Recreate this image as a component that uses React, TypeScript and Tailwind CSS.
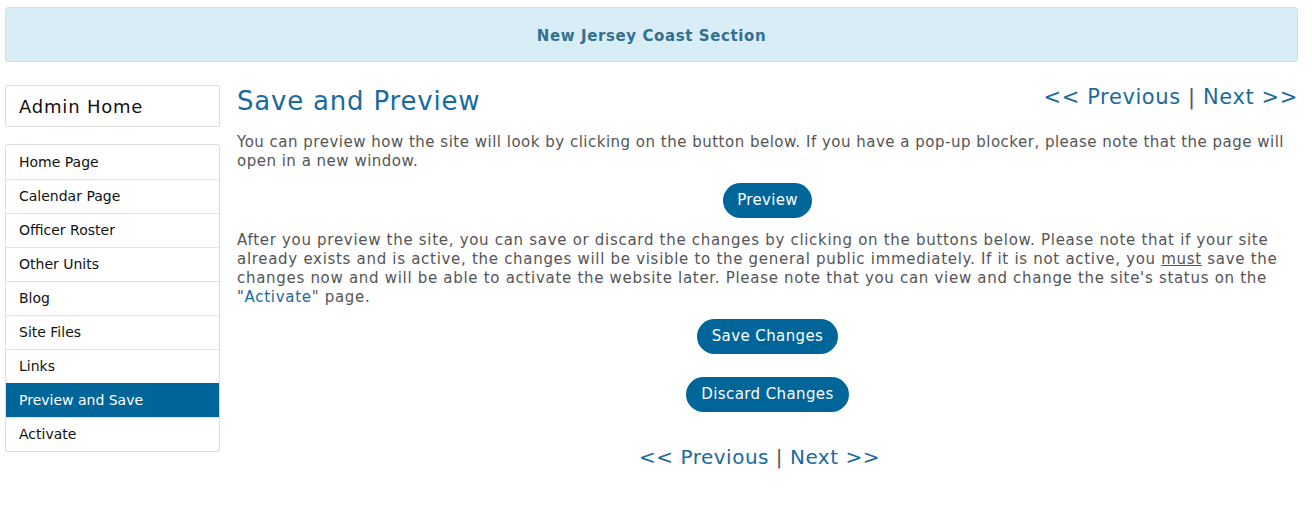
const NAV = [
  "Home Page",
  "Calendar Page",
  "Officer Roster",
  "Other Units",
  "Blog",
  "Site Files",
  "Links",
  "Preview and Save",
  "Activate",
];

function PrevNext({ size }: { size: "lg" | "md" }) {
  return (
    <div
      className={
        size === "lg"
          ? "text-[21px] leading-6 text-[#1b6a9c] tracking-[0.6px]"
          : "text-[20px] leading-6 text-[#1b6a9c] tracking-[0.5px]"
      }
    >
      <a href="#">&lt;&lt; Previous</a>
      <span className="text-[#555]"> | </span>
      <a href="#">Next &gt;&gt;</a>
    </div>
  );
}

export default function App() {
  return (
    <div
      className="min-h-[530px] bg-white pt-[7px] pl-[5px] pr-[14px]"
      style={{ fontFamily: '"DejaVu Sans", Verdana, sans-serif' }}
    >
      {/* Banner */}
      <div className="h-[55px] flex items-center justify-center rounded-[3px] border border-[#bce8f1] bg-[#d9edf7]">
        <span className="mt-[3px] text-[15px] font-bold tracking-[0.6px] text-[#31708f]">New Jersey Coast Section</span>
      </div>

      <div className="mt-[23px] flex gap-[17px]">
        {/* Sidebar */}
        <div className="w-[215px] shrink-0">
          <div className="h-[42px] flex items-center px-[13px] border border-[#ddd] rounded-[2px] text-[18px] tracking-[0.8px] text-[#111]">
            Admin Home
          </div>
          <div className="mt-[17px] border border-[#ddd] rounded-[2px]">
            {NAV.map((item, i) => (
              <div
                key={item}
                className={
                  item === "Preview and Save"
                    ? "h-[34px] flex items-center px-[13px] text-[14px] bg-[#006699] text-white"
                    : i === 0
                    ? "h-[34px] flex items-center px-[13px] text-[14px] text-[#111]"
                    : "h-[34px] flex items-center px-[13px] text-[14px] text-[#111] border-t border-[#e5e0e8]"
                }
              >
                {item}
              </div>
            ))}
          </div>
        </div>

        {/* Main */}
        <div className="flex-1 text-[15px] leading-[19px] tracking-[0.7px] text-[#555]">
          <div className="flex items-start justify-between">
            <h1 className="text-[26px] leading-[32px] tracking-[0.8px] text-[#1b6a9c]">Save and Preview</h1>
            <PrevNext size="lg" />
          </div>
          <p className="mt-[16px] tracking-[0.5px]">
            You can preview how the site will look by clicking on the button below. If you have a pop-up
            blocker, please note that the page will open in a new window.
          </p>
          <div className="mt-[12px] flex justify-center">
            <button className="h-[35px] px-[14px] rounded-full bg-[#006699] text-white text-[15px] tracking-[0.3px]">Preview</button>
          </div>
          <p className="mt-[13px]">
            After you preview the site, you can save or discard the changes by clicking on the buttons below.
            Please note that if your site already exists and is active, the changes will be visible to the
            general public immediately. If it is not active, you <span className="underline">must</span> save
            the changes now and will be able to activate the website later. Please note that you can view and
            change the site's status on the "<a href="#" className="text-[#1b6a9c]">Activate</a>" page.
          </p>
          <div className="mt-[12px] flex flex-col items-center gap-[23px]">
            <button className="h-[35px] px-[15px] rounded-full bg-[#006699] text-white text-[15px] tracking-[0.4px]">Save Changes</button>
            <button className="h-[35px] px-[15px] rounded-full bg-[#006699] text-white text-[15px] tracking-[0.4px]">Discard Changes</button>
          </div>
          <div className="mt-[33px] flex justify-center pr-[16px]">
            <PrevNext size="md" />
          </div>
        </div>
      </div>
    </div>
  );
}
